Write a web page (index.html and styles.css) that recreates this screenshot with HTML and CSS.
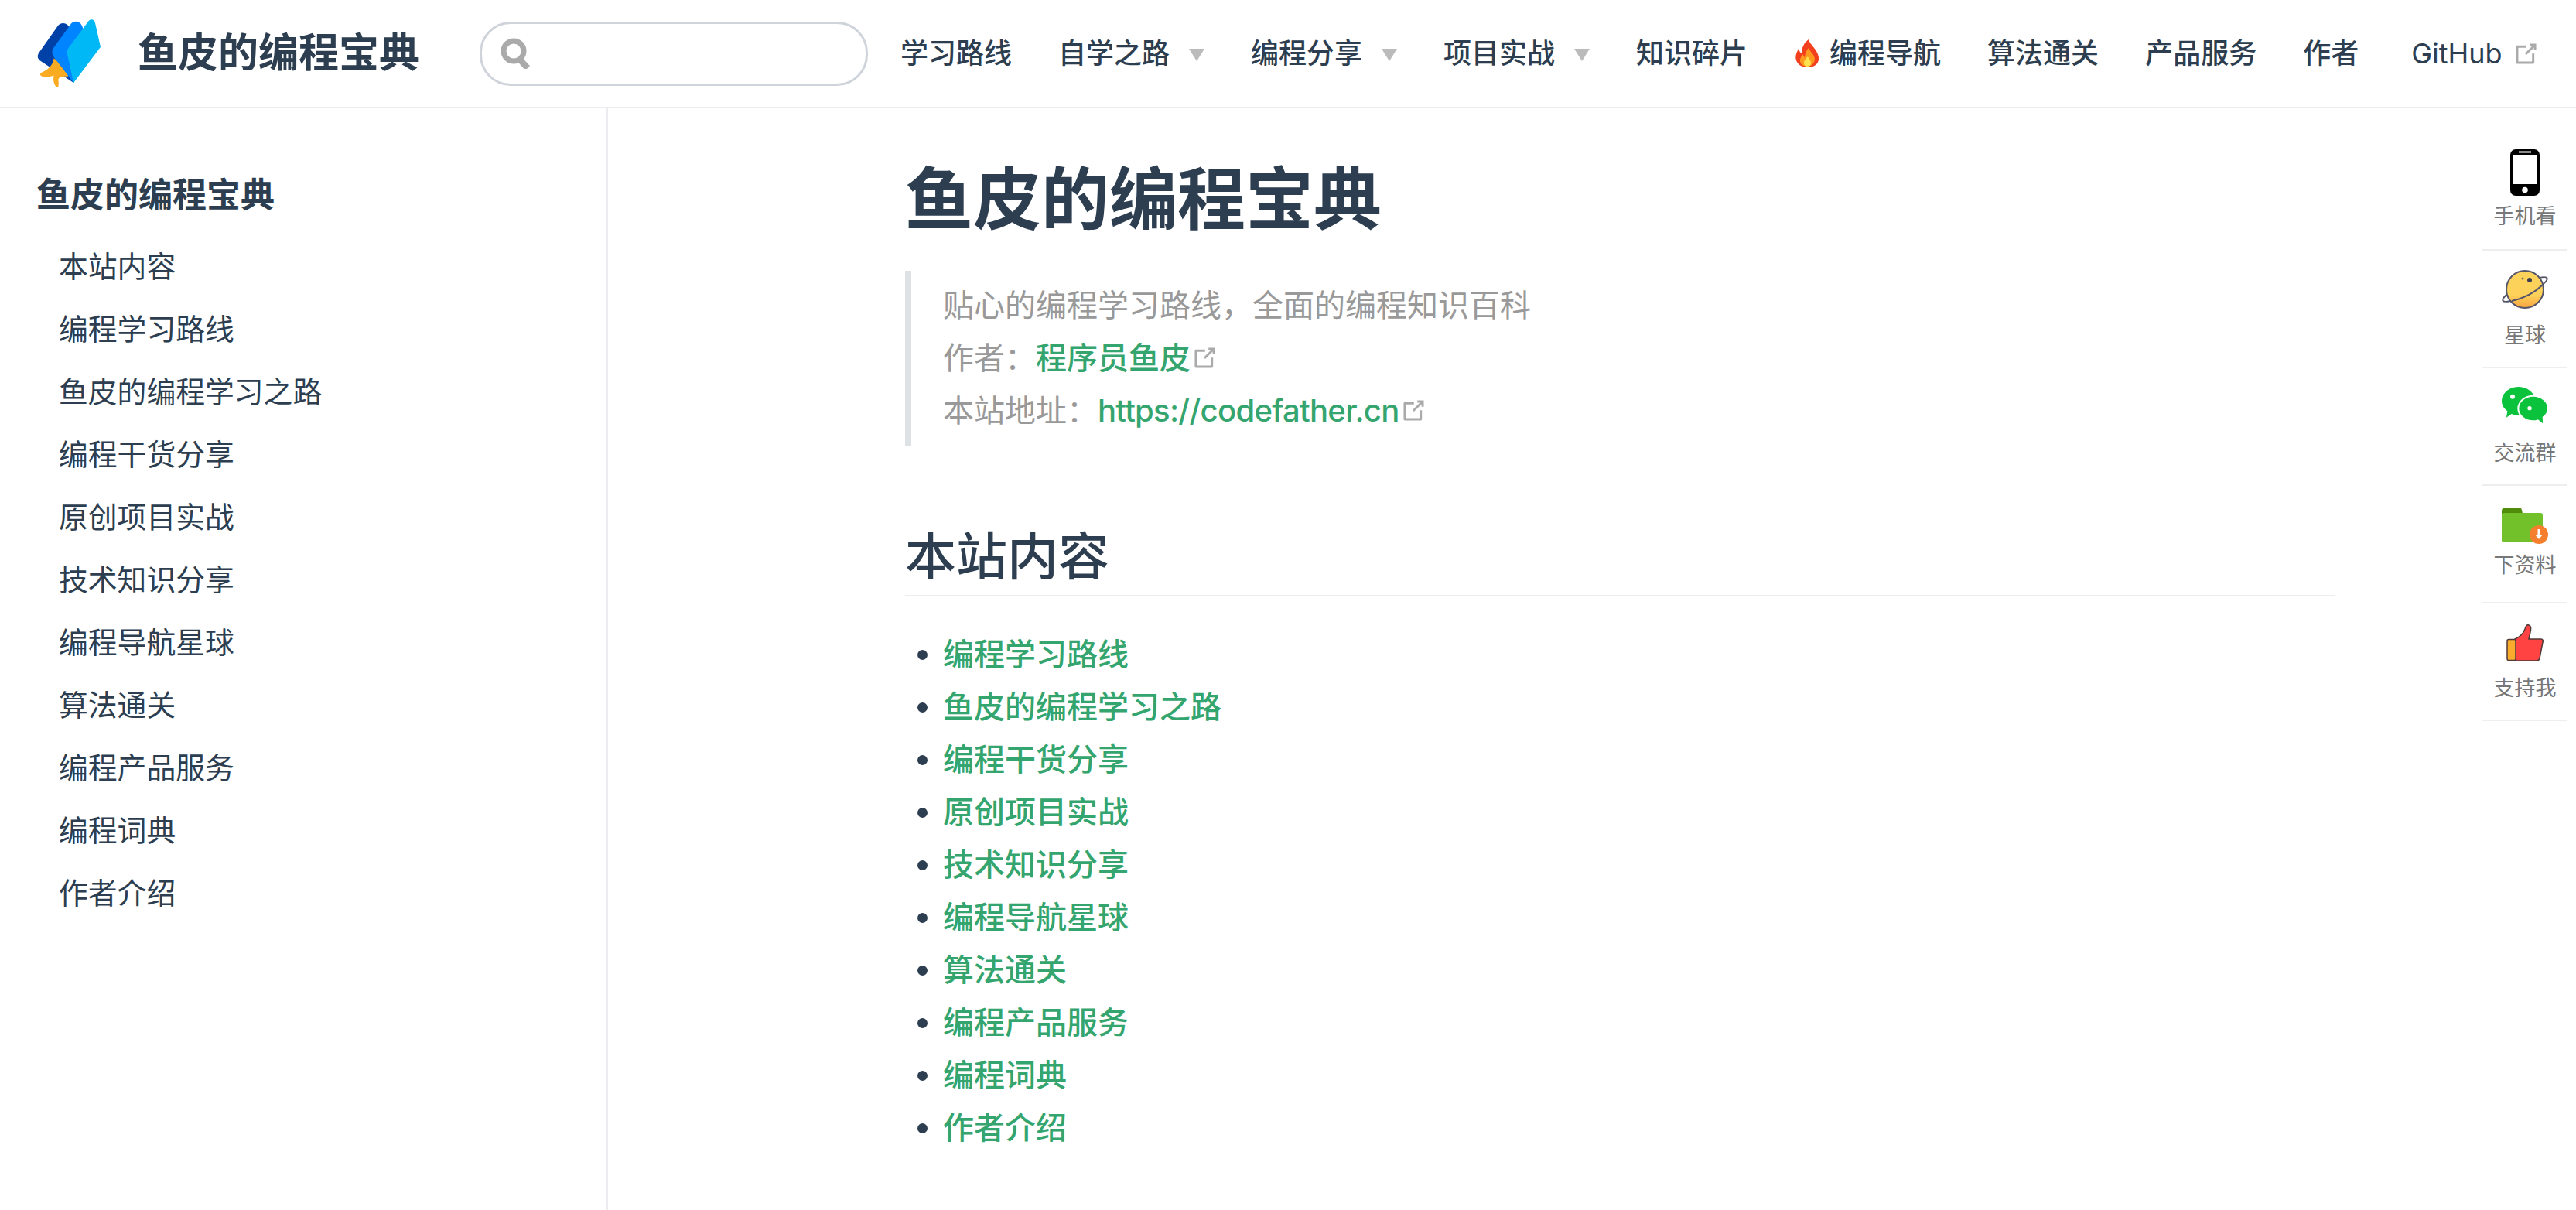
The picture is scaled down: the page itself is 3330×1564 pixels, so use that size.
FILE: index.html
```html
<!DOCTYPE html>
<html lang="zh-CN">
<head>
    <meta charset="UTF-8">
    <title>鱼皮的编程宝典</title>
    <link rel="stylesheet" href="styles.css">
</head>
<body>
    <svg class="defs" width="0" height="0">
        <symbol id="outbound" viewBox="0 0 100 100">
            <path fill="currentColor" d="M18.8,85.1h56l0,0c2.2,0,4-1.8,4-4v-32h-8v28h-48v-48h28v-8h-32l0,0c-2.2,0-4,1.8-4,4v56C14.8,83.3,16.6,85.1,18.8,85.1z"/>
            <polygon fill="currentColor" points="45.7,48.7 51.3,54.3 77.2,28.5 77.2,37.2 85.2,37.2 85.2,14.9 62.8,14.9 62.8,22.9 71.5,22.9"/>
        </symbol>
    </svg>

    <header class="navbar">
        <a class="brand" href="#">
            <svg class="logo" viewBox="85 65 250 275">
                <path fill="#0041a8" d="M165 96C175 82 195 82 206 94L260 200L227 317L98 232C86 224 84 212 92 200Z"/>
                <path fill="#fbab22" d="M150 222C146 248 130 265 102 277C94 282 96 290 106 292C125 296 140 292 150 288C146 305 150 325 162 334C168 336 170 325 168 310C166 298 172 292 205 292L215 260Z"/>
                <path fill="#0084ff" d="M218 86C228 74 250 76 258 92L300 190L227 317C210 295 180 255 151 218C142 206 141 194 148 182Z"/>
                <path fill="#00b8f5" d="M284 78C294 66 308 70 311 84L332 178L227 317L203 208C200 196 202 188 208 180Z"/>
            </svg>
            <span class="brand-title">鱼皮的编程宝典</span>
        </a>
        <div class="search-box">
            <svg class="search-icon" viewBox="0 0 40 40">
                <circle cx="17" cy="17" r="13" fill="none" stroke="#aaa" stroke-width="7"/>
                <path d="M25 28L35 39" stroke="#aaa" stroke-width="8"/>
            </svg>
            <input type="text" aria-label="Search">
        </div>
        <nav class="nav-links">
            <a href="#">学习路线</a>
            <a href="#">自学之路<span class="arrow"></span></a>
            <a href="#">编程分享<span class="arrow"></span></a>
            <a href="#">项目实战<span class="arrow"></span></a>
            <a href="#">知识碎片</a>
            <a href="#">
                <svg class="flame" viewBox="0 0 31 36">
                    <path fill="#f2401f" d="M17 0C19 7 25 10 28 17C31 23 31 29 26 33C23 35.500 19 36 15.500 36C9 36 3 33 1 27C-1 21 2 16 4 12C5 15 6 17 8 18C8 11 11 4 17 0Z"/>
                    <path fill="#ff9a1f" d="M17 11C18 15 23 18 24.500 23C26 28 23 34 16 35C9 35 5.500 31 6 26C6.500 23 8 21 9.500 19C10 21 11 22 12 23C12.500 18 14 14 17 11Z"/>
                    <path fill="#ffe14d" d="M16 22C17 25 20 27 20 30C20 33 18 35 15.500 35C13 35 11 33 11 30.500C11 27 14 25 16 22Z"/>
                </svg>编程导航</a>
            <a href="#">算法通关</a>
            <a href="#">产品服务</a>
            <a href="#">作者</a>
            <a class="nav-github" href="#">GitHub<svg class="outbound nav-outbound"><use href="#outbound"/></svg></a>
        </nav>
    </header>

    <div class="page">
        <aside class="sidebar">
            <h2 class="sidebar-title">鱼皮的编程宝典</h2>
            <ul class="sidebar-links">
                <li><a href="#">本站内容</a></li>
                <li><a href="#">编程学习路线</a></li>
                <li><a href="#">鱼皮的编程学习之路</a></li>
                <li><a href="#">编程干货分享</a></li>
                <li><a href="#">原创项目实战</a></li>
                <li><a href="#">技术知识分享</a></li>
                <li><a href="#">编程导航星球</a></li>
                <li><a href="#">算法通关</a></li>
                <li><a href="#">编程产品服务</a></li>
                <li><a href="#">编程词典</a></li>
                <li><a href="#">作者介绍</a></li>
            </ul>
        </aside>

        <main class="content">
            <h1>鱼皮的编程宝典</h1>
            <blockquote>
                贴心的编程学习路线，全面的编程知识百科<br>
                作者：<a href="#">程序员鱼皮<svg class="outbound"><use href="#outbound"/></svg></a><br>
                本站地址：<a class="latin" href="#">https://codefather.cn<svg class="outbound"><use href="#outbound"/></svg></a>
            </blockquote>
            <h2>本站内容</h2>
            <ul class="toc">
                <li><a href="#">编程学习路线</a></li>
                <li><a href="#">鱼皮的编程学习之路</a></li>
                <li><a href="#">编程干货分享</a></li>
                <li><a href="#">原创项目实战</a></li>
                <li><a href="#">技术知识分享</a></li>
                <li><a href="#">编程导航星球</a></li>
                <li><a href="#">算法通关</a></li>
                <li><a href="#">编程产品服务</a></li>
                <li><a href="#">编程词典</a></li>
                <li><a href="#">作者介绍</a></li>
            </ul>
        </main>

        <div class="side-rail">
            <a class="rail-item rail-first" href="#">
                <svg class="rail-icon icon-phone" viewBox="0 0 38 60">
                    <rect width="38" height="60" rx="7" fill="#000"/>
                    <rect x="4" y="7" width="30" height="38" fill="#fff"/>
                    <rect x="11" y="2" width="16" height="3" fill="#8a8a8a"/>
                    <circle cx="19" cy="52.500" r="3.800" fill="#fff"/>
                </svg>
                <span>手机看</span>
            </a>
            <a class="rail-item" href="#">
                <svg class="rail-icon icon-planet" viewBox="0 0 60 54">
                    <defs>
                        <linearGradient id="planet" x1="0" y1="0" x2="0" y2="1">
                            <stop offset="0.650" stop-color="#fdd25a"/>
                            <stop offset="1" stop-color="#f7a33f"/>
                        </linearGradient>
                    </defs>
                    <ellipse cx="30" cy="26" rx="32" ry="7" fill="none" stroke="#55556a" stroke-width="2" transform="rotate(-27 30 26)"/>
                    <circle cx="30" cy="26" r="24" fill="url(#planet)" stroke="#55556a" stroke-width="2"/>
                    <path d="M13 41C26 38 42 31 53 20" fill="none" stroke="#55556a" stroke-width="2"/>
                    <circle cx="36" cy="14" r="3" fill="#3c3c50"/>
                    <circle cx="27" cy="12" r="1.500" fill="#7a6a4a"/>
                </svg>
                <span>星球</span>
            </a>
            <a class="rail-item" href="#">
                <svg class="rail-icon icon-wechat" viewBox="0 0 180 150">
                    <path fill="#0bc23d" d="M65 0C101 0 130 25 130 55C130 85 101 110 65 110C55 110 46 108 38 105L18 119L22 94C8 84 0 70 0 55C0 25 29 0 65 0Z"/>
                    <path fill="#0bc23d" stroke="#fff" stroke-width="6" d="M122 35C154 35 180 57 180 83C180 97 173 109 161 118L163 148L140 130C134 132 128 133 122 133C90 133 64 111 64 84C64 57 90 35 122 35Z"/>
                    <circle cx="42" cy="38" r="9" fill="#fff"/>
                    <circle cx="108" cy="83" r="8" fill="#fff"/>
                </svg>
                <span>交流群</span>
            </a>
            <a class="rail-item" href="#">
                <svg class="rail-icon icon-folder" viewBox="0 0 60 48">
                    <path fill="#4f8c0a" d="M0 4C0 2 2 0 4 0H23C25 0 26 2 27 8H0Z"/>
                    <rect y="7" width="53" height="38" rx="3" fill="#72c12b"/>
                    <circle cx="48" cy="35" r="12" fill="#f57f2d"/>
                    <path fill="#fff" d="M46.500 28H49.500V35H53L48 41L43 35H46.500Z"/>
                </svg>
                <span>下资料</span>
            </a>
            <a class="rail-item" href="#">
                <svg class="rail-icon icon-thumb" viewBox="0 0 48 48">
                    <path fill="#ff4343" stroke="#4f3a3a" stroke-width="1.500" d="M11 19C18 16 22 12 24 6C25 2 27 0 29 1C32 2 32 6 31 10L29 19H45C47 19 48 21 47 23L43 44C42.500 46 41 47 39 47H11Z"/>
                    <rect x="1" y="19.500" width="11" height="27" rx="2" fill="#f9ab2e" stroke="#4f3a3a" stroke-width="1.500"/>
                </svg>
                <span>支持我</span>
            </a>
        </div>
    </div>
</body>
</html>
```

FILE: styles.css
```css
* {
    box-sizing: border-box;
}
html, body {
    height: 100%;
}
body {
    margin: 0;
    overflow: hidden;
    font-family: Inter, "Noto Sans CJK SC", sans-serif;
    font-size: 40px;
    line-height: 68px;
    color: #2c3e50;
    background-color: #fff;
}
a {
    color: inherit;
    text-decoration: none;
}
ul {
    list-style: none;
    margin: 0;
    padding: 0;
}
.defs {
    display: block;
    height: 0;
}
.outbound {
    width: 37px;
    height: 37px;
    color: #aaa;
    vertical-align: -4px;
}

/* top bar */
.navbar {
    display: flex;
    align-items: center;
    height: 140px;
    padding-left: 48px;
    border-bottom: 2px solid #eaecef;
}
.brand {
    display: flex;
    align-items: center;
}
.logo {
    width: 83px;
    height: 92px;
    margin-right: 47px;
}
.brand-title {
    font-size: 52px;
    font-weight: 700;
    line-height: 1;
}
.search-box {
    display: flex;
    align-items: center;
    width: 502px;
    height: 83px;
    margin-left: 78px;
    padding-left: 24px;
    border: 3px solid #cfd4db;
    border-radius: 40px;
}
.search-icon {
    width: 40px;
    height: 40px;
    flex: none;
}
.search-box input {
    flex: 1;
    min-width: 0;
    border: none;
    outline: none;
    background: none;
}
.nav-links {
    display: flex;
    align-items: center;
    gap: 60px;
    margin-left: 42px;
    font-size: 36px;
    font-weight: 500;
    line-height: 1;
    white-space: nowrap;
}
.nav-links a {
    display: flex;
    align-items: center;
}
.arrow {
    width: 0;
    height: 0;
    margin: 4px 0 0 25px;
    border-left: 10px solid transparent;
    border-right: 10px solid transparent;
    border-top: 16px solid #bbb;
}
.flame {
    width: 31px;
    height: 36px;
    margin: 0 13px 0 2px;
}
.nav-links .nav-github {
    margin-left: 8px;
    font-weight: 400;
}
.nav-outbound {
    margin-left: 12px;
}

/* sidebar + article */
.page {
    display: flex;
    height: calc(100% - 140px);
}
.sidebar {
    flex: none;
    width: 786px;
    padding: 78px 0 0 47px;
    border-right: 2px solid #eaecef;
}
.sidebar-title {
    margin: 0 0 18px;
    font-size: 44px;
    font-weight: 700;
    line-height: 68px;
}
.sidebar-links {
    padding-left: 29px;
    font-size: 37.800px;
    line-height: 81px;
}
.content {
    flex: none;
    width: 1848px;
    margin-left: 384px;
    padding-top: 62px;
}
.content h1 {
    margin: 0 0 38px;
    font-size: 88px;
    font-weight: 700;
    line-height: 110px;
}
blockquote {
    margin: 0;
    padding: 11px 0 11px 41px;
    border-left: 8px solid #dfe2e5;
    color: #999;
}
blockquote a, .toc a {
    color: #34a56e;
    font-weight: 500;
}
.latin {
    letter-spacing: -0.7px;
}
.content h2 {
    margin: 102px 0 0;
    padding-bottom: 9px;
    border-bottom: 2px solid #eaecef;
    font-size: 66px;
    font-weight: 500;
    line-height: 82px;
}
.toc {
    margin-top: 41px;
    padding-left: 49px;
    list-style: disc;
}

/* floating shortcuts on the right */
.side-rail {
    flex: none;
    width: 110px;
    margin: 0 11px 0 auto;
    font-size: 27px;
    line-height: 34px;
    color: #777;
}
.rail-item {
    display: flex;
    flex-direction: column;
    align-items: center;
    height: 152px;
    padding-top: 24px;
    border-bottom: 2px solid #eee;
}
.rail-first {
    height: 184px;
    padding-top: 53px;
}
.rail-icon {
    flex: none;
}
.icon-phone {
    width: 38px;
    height: 60px;
    margin-bottom: 10px;
}
.icon-planet {
    width: 60px;
    height: 54px;
    margin-bottom: 15px;
}
.icon-wechat {
    width: 60px;
    height: 50px;
    margin-bottom: 19px;
}
.icon-folder {
    width: 60px;
    height: 48px;
    margin: 4px 0 10px;
}
.icon-thumb {
    width: 48px;
    height: 48px;
    margin: 3px 0 18px;
}
```
